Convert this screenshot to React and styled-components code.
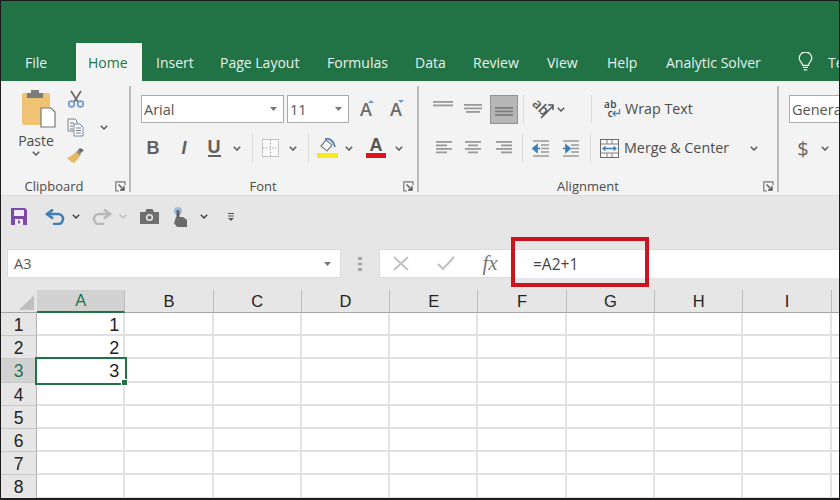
import React from "react";
import styled, { createGlobalStyle } from "styled-components";

const GlobalStyle = createGlobalStyle`
  html, body { margin: 0; padding: 0; background: #fff; }
  * { box-sizing: border-box; }
`;

const Frame = styled.div`
  width: 840px;
  height: 500px;
  display: flex;
  flex-direction: column;
  overflow: hidden;
  border: 1px solid #1c1c1c;
  border-bottom-width: 2px;
  background: #e6e6e6;
  font-family: "Open Sans", "Noto Sans", sans-serif;
  color: #4a4a4a;
`;

const TitleBand = styled.div`
  height: 80px;
  flex: none;
  background: #217346;
  padding: 42px 0 0 10px;
  display: flex;
`;

const Tab = styled.div`
  flex: none;
  width: ${(p) => p.$w}px;
  height: 38px;
  display: flex;
  align-items: center;
  padding-left: ${(p) => (p.$active ? 12 : 14)}px;
  font-size: 14px;
  white-space: nowrap;
  color: ${(p) => (p.$active ? "#217346" : "#e9f1ec")};
  background: ${(p) => (p.$active ? "#f3f3f3" : "transparent")};
`;

const Ribbon = styled.div`
  height: 115px;
  flex: none;
  display: flex;
  background: #f3f3f3;
  border-bottom: 1px solid #dcdcdc;
`;

const Group = styled.div`
  flex: none;
  position: relative;
  width: ${(p) => p.$w}px;
  display: flex;
  flex-direction: column;
  &::after {
    content: "";
    position: absolute;
    top: 5px;
    bottom: 3px;
    right: 0;
    width: 2px;
    background: ${(p) => (p.$last ? "transparent" : "#bdbdbd")};
  }
`;

const GroupBody = styled.div`
  height: 96px;
  flex: none;
  display: flex;
  flex-direction: ${(p) => (p.$row ? "row" : "column")};
  gap: ${(p) => (p.$row ? 0 : 11)}px;
  padding: ${(p) => (p.$row ? "9px 0 0 15px" : "14px 0 0 10px")};
`;

const GroupLabel = styled.div`
  height: 18px;
  display: flex;
  align-items: center;
  justify-content: center;
  font-size: 13px;
  position: relative;
  padding-right: ${(p) => p.$pr || 0}px;
`;

const Launcher = styled.svg`
  position: absolute;
  right: ${(p) => p.$right}px;
  top: 4px;
`;

const Row = styled.div`
  height: 28px;
  display: flex;
  align-items: center;
`;

const Slot = styled.div`
  flex: none;
  width: ${(p) => p.$w}px;
  margin-left: ${(p) => p.$ml || 0}px;
  margin-top: ${(p) => p.$mt || 0}px;
  display: flex;
  align-items: center;
  justify-content: center;
`;

const VSep = styled.div`
  flex: none;
  width: 1px;
  height: 28px;
  margin-left: ${(p) => p.$ml}px;
  background: #dadada;
`;

const PasteCol = styled.div`
  width: 40px;
  display: flex;
  flex-direction: column;
  align-items: center;
`;

const PasteIcon = styled.svg`
  align-self: flex-end;
`;

const PasteLabel = styled.div`
  font-size: 14px;
  line-height: 19px;
  margin-top: 3px;
  margin-bottom: 1px;
`;

const SmallIcons = styled.div`
  width: 20px;
  margin-left: 10px;
  display: flex;
  flex-direction: column;
  align-items: center;
  gap: 10px;
`;

const ClipMore = styled.div`
  width: 36px;
  padding-top: 35px;
  display: flex;
  justify-content: center;
`;

const Combo = styled.div`
  flex: none;
  width: ${(p) => p.$w}px;
  margin-left: ${(p) => p.$ml || 0}px;
  height: 28px;
  display: flex;
  align-items: center;
  justify-content: space-between;
  padding: 0 6px 0 2px;
  background: #fff;
  border: 1px solid #ababab;
  font-size: 14.5px;
  white-space: nowrap;
  color: #555;
`;

const SizeA = styled.div`
  position: relative;
  font-size: 18px;
  font-weight: 600;
  color: #6a6a6a;
  line-height: 1;
  &::after {
    content: "";
    position: absolute;
    right: -2px;
    top: 0;
    border-left: 3px solid transparent;
    border-right: 3px solid transparent;
    ${(p) => (p.$down ? "border-top" : "border-bottom")}: 3px solid #6b9bc6;
  }
`;

const StyleLetter = styled.div`
  font-family: "Liberation Sans", sans-serif;
  font-size: 18px;
  font-weight: 700;
  color: #616161;
  font-style: ${(p) => (p.$italic ? "italic" : "normal")};
  border-bottom: ${(p) => (p.$under ? "2px solid #616161" : "none")};
  line-height: ${(p) => (p.$under ? "16px" : "18px")};
`;

const ColorA = styled.div`
  width: 20px;
  text-align: center;
  font-family: "Liberation Sans", sans-serif;
  font-size: 18px;
  font-weight: 700;
  line-height: 15px;
  color: #555;
  border-bottom: 5px solid #e1101b;
`;

const ActiveAlign = styled.div`
  flex: none;
  width: 28px;
  height: 29px;
  margin-left: 1px;
  display: flex;
  align-items: center;
  justify-content: center;
  padding-top: 7px;
  background: #b6b6b6;
  border: 1px solid #929292;
`;

const ActionText = styled.div`
  flex: none;
  width: ${(p) => p.$w}px;
  margin-left: 5px;
  margin-top: -2px;
  font-size: 14.3px;
  white-space: nowrap;
  color: #4c4c4c;
`;

const WrapGlyph = styled.div`
  width: 17px;
  position: relative;
  font-size: 10px;
  line-height: 9px;
  color: #444;
  font-weight: 600;
  letter-spacing: 0.5px;
  text-align: center;
  padding-right: 2px;
`;

const WrapArrow = styled.svg`
  position: absolute;
  right: -1px;
  bottom: 0;
`;

const OrientGlyph = styled.div`
  position: relative;
  width: 23px;
  height: 21px;
`;

const OrientText = styled.span`
  position: absolute;
  left: 1px;
  top: 0;
  font-size: 14px;
  line-height: 15px;
  font-weight: 600;
  color: #5c5c5c;
  transform: rotate(45deg);
`;

const OrientArrow = styled.svg`
  position: absolute;
  left: 0;
  top: 0;
`;

const Dollar = styled.div`
  font-size: 20px;
  color: #666;
`;

const QuickBar = styled.div`
  height: 44px;
  flex: none;
  display: flex;
  align-items: center;
  padding-bottom: 3px;
`;

const FormulaRow = styled.div`
  height: 50px;
  flex: none;
  display: flex;
  align-items: flex-start;
  padding: 9px 0 0 6px;
`;

const NameBox = styled.div`
  flex: none;
  width: 334px;
  height: 29px;
  display: flex;
  align-items: center;
  justify-content: space-between;
  padding: 0 9px 0 6px;
  background: #fff;
  border: 1px solid #dcdcdc;
  font-size: 14.5px;
  color: #555;
`;

const Grip = styled.div`
  flex: none;
  width: 38px;
  height: 29px;
  display: flex;
  align-items: center;
  justify-content: center;
`;

const FuncBox = styled.div`
  flex: none;
  width: 133px;
  height: 29px;
  display: flex;
  align-items: center;
  background: #fff;
  border: 1px solid #dcdcdc;
  border-right: none;
`;

const Fx = styled.div`
  flex: none;
  width: 24px;
  margin-left: 23px;
  text-align: center;
  font-family: "Liberation Serif", serif;
  font-size: 21px;
  font-style: italic;
  color: #777;
`;

const FormulaInput = styled.div`
  flex: 1;
  position: relative;
  height: 29px;
  padding-left: 21px;
  line-height: 28px;
  background: #fff;
  border-top: 1px solid #dcdcdc;
  font-size: 15.5px;
  color: #444;
`;

const RedBox = styled.div`
  position: absolute;
  left: -1px;
  top: -13px;
  width: 138px;
  height: 50px;
  border: 4px solid #cb141d;
`;

const Sheet = styled.div`
  display: grid;
  grid-template-columns: 36px repeat(10, 88.3px);
  grid-template-rows: 23px repeat(8, 23.2px);
  font-family: "Liberation Sans", Arial, sans-serif;
  background: #fff;
`;

const Corner = styled.div`
  background: #e6e6e6;
  border-bottom: 1px solid #a6a6a6;
  display: flex;
  align-items: flex-end;
  justify-content: flex-end;
  padding: 0 3px 2px 0;
`;

const ColHead = styled.div`
  display: flex;
  align-items: center;
  justify-content: center;
  font-size: 16.5px;
  background: ${(p) => (p.$on ? "#d2d2d2" : "#e6e6e6")};
  color: ${(p) => (p.$on ? "#217346" : "#222")};
  border-right: 1px solid #bcbcbc;
  border-bottom: ${(p) => (p.$on ? "2px solid #217346" : "1px solid #a6a6a6")};
`;

const RowHead = styled.div`
  display: flex;
  align-items: center;
  justify-content: center;
  padding-top: 3px;
  font-size: 17.5px;
  background: ${(p) => (p.$on ? "#d2d2d2" : "#e6e6e6")};
  color: ${(p) => (p.$on ? "#217346" : "#222")};
  border-bottom: 1px solid #c8c8c8;
  border-right: 1px solid #b4b4b4;
`;

const Cell = styled.div`
  position: relative;
  display: flex;
  align-items: center;
  justify-content: flex-end;
  padding: 3px 4px 0 0;
  font-size: 18px;
  color: #1f1f1f;
  border-right: 2px solid #e3e3e3;
  border-bottom: 2px solid #e0e0e0;
  ${(p) =>
    p.$selected &&
    `
    border-color: transparent;
    outline: 2px solid #217346;
    outline-offset: 0;
    z-index: 1;
    &::after {
      content: "";
      position: absolute;
      right: -4px;
      bottom: -4px;
      width: 5px;
      height: 5px;
      background: #217346;
      outline: 1px solid #fff;
    }
  `}
`;

const Chevron = ({ color = "#5a5a5a" }) => (
  <svg width="8" height="5" viewBox="0 0 8 5">
    <path d="M.8.8 4 4l3.2-3.2" fill="none" stroke={color} strokeWidth="1.5" />
  </svg>
);

const Caret = () => (
  <svg width="7" height="4" viewBox="0 0 7 4">
    <path d="M0 0h7L3.5 4z" fill="#777" />
  </svg>
);

const LauncherIcon = ({ right }) => (
  <Launcher $right={right} width="11" height="11" viewBox="0 0 11 11">
    <path d="M10 4V.8H.8V10H4" fill="none" stroke="#777" strokeWidth="1.2" />
    <path d="M3.5 3.5 9 9M9 5v4H5" fill="none" stroke="#555" strokeWidth="1.3" />
  </Launcher>
);

const Lines = ({ rows, width = 16, color = "#9a9a9a" }) => (
  <svg width={width} height={rows.length * 3.5} viewBox={`0 0 ${width} ${rows.length * 3.5}`}>
    {rows.map(([x, w], i) => (
      <rect key={i} x={x} y={i * 3.5} width={w} height="1.8" fill={color} />
    ))}
  </svg>
);

const Scissors = () => (
  <svg width="18" height="18" viewBox="0 0 18 18">
    <path d="M4 1l7 11M14 1 7 12" stroke="#6d6d6d" strokeWidth="1.8" fill="none" />
    <circle cx="4.5" cy="14" r="2.8" fill="none" stroke="#6f9ccb" strokeWidth="1.7" />
    <circle cx="13.5" cy="14" r="2.8" fill="none" stroke="#6f9ccb" strokeWidth="1.7" />
  </svg>
);

const Copy = () => (
  <svg width="18" height="19" viewBox="0 0 18 19">
    <path d="M1 1h7l2 2v10H1z" fill="#f6f6f6" stroke="#808080" />
    <path d="M7 6h6l3 3v9H7z" fill="#fff" stroke="#6e8ba8" />
    <path d="M3 5h4M3 8h3M3 11h3M9 10h5M9 12.500h5M9 15h5" stroke="#7a7a7a" />
  </svg>
);

const Brush = () => (
  <svg width="18" height="17" viewBox="0 0 18 17">
    <path d="M9 5l4 4-3 4-3 3-3-1.500L0 11l4-2z" fill="#e9b862" />
    <path d="M9 5l2-2 3 3-1 3z" fill="#a08a68" />
    <path d="M11 3l2-2 4 2-3 3z" fill="#6a6a6a" />
  </svg>
);

const BorderIcon = () => (
  <svg width="17" height="18" viewBox="0 0 17 18">
    <rect x=".5" y=".5" width="16" height="17" fill="#fbfbfb" stroke="#c4c4c4" />
    <path d="M8.500 1v16M1 9h15" stroke="#a6a6a6" strokeDasharray="1.500 1.500" />
  </svg>
);

const FillIcon = () => (
  <svg width="21" height="20" viewBox="0 0 21 20">
    <path d="M4 8l5-6 6 5-5 6z" fill="#fff" stroke="#7a7a7a" strokeWidth="1.2" />
    <path d="M8 1c4-1 7 1 9 5l1 3" fill="none" stroke="#4d86bb" strokeWidth="1.8" />
    <rect x="0" y="15" width="21" height="5" fill="#f4ea1f" />
  </svg>
);

const IndentIcon = ({ right }) => (
  <svg width="18" height="17" viewBox="0 0 18 17">
    <path d="M1 1h16M9 5h8M9 8.500h8M9 12h8M1 16h16" stroke="#9b9b9b" strokeWidth="1.5" />
    {right ? (
      <path d="M1 8.500h4M4 5l4 3.500L4 12z" stroke="#3f7db5" strokeWidth="1.6" fill="#3f7db5" />
    ) : (
      <path d="M8 8.500H4M5 5 1 8.500 5 12z" stroke="#3f7db5" strokeWidth="1.6" fill="#3f7db5" />
    )}
  </svg>
);

const MergeIcon = () => (
  <svg width="19" height="19" viewBox="0 0 19 19">
    <rect x=".5" y=".5" width="18" height="18" fill="#fafafa" stroke="#6a6a6a" />
    <path d="M1 5h17M1 14h17M7 1v4M12 1v4M7 14v4M12 14v4" stroke="#808080" />
    <path d="M3 9.500h13M5.500 7.500l-2.500 2 2.500 2M13.500 7.500l2.500 2-2.500 2" fill="none" stroke="#3f7db5" strokeWidth="1.3" />
  </svg>
);

const SaveIcon = () => (
  <svg width="16" height="17" viewBox="0 0 16 17">
    <path d="M0 0h14l2 2v15H0z" fill="#7d4aa8" />
    <rect x="3" y="2" width="10" height="6" fill="#f0eaf5" />
    <rect x="4" y="11" width="8" height="6" fill="#f0eaf5" />
    <rect x="7" y="12.500" width="2" height="3" fill="#7d4aa8" />
  </svg>
);

const ArrowIcon = ({ flip, color }) => (
  <svg width="20" height="16" viewBox="0 0 20 16" style={flip ? { transform: "scaleX(-1)" } : undefined}>
    <path d="M4 5h9a5 5 0 0 1 0 10H8" fill="none" stroke={color} strokeWidth="2.6" />
    <path d="M8 .5 2 5l6 4.500" fill="none" stroke={color} strokeWidth="2.6" />
  </svg>
);

const CameraIcon = () => (
  <svg width="19" height="15" viewBox="0 0 19 15">
    <path d="M0 3h5l1.500-3h6L14 3h5v12H0z" fill="#6f6f6f" />
    <circle cx="9.500" cy="8.500" r="3.600" fill="#e6e6e6" />
    <circle cx="9.500" cy="8.500" r="2" fill="#6f6f6f" />
  </svg>
);

const TouchIcon = () => (
  <svg width="15" height="20" viewBox="0 0 15 20">
    <circle cx="5" cy="4" r="4" fill="#9dbcd9" />
    <rect x="3.500" y="3" width="3" height="9" rx="1.400" fill="#5f5f5f" />
    <path d="M3 10h7l4 3v7H4l-3-4z" fill="#6a6a6a" />
  </svg>
);

const CustomizeIcon = () => (
  <svg width="8" height="8" viewBox="0 0 8 8">
    <path d="M1 .5h6M1 3h6" stroke="#555" strokeWidth="1.1" />
    <path d="M1 5h6L4 8z" fill="#555" />
  </svg>
);

const Bulb = () => (
  <svg width="15" height="20" viewBox="0 0 17 24">
    <path d="M5 16c0-3-4-4.500-4-8.500a7.500 7.500 0 0 1 15 0c0 4-4 5.500-4 8.500z" fill="none" stroke="#f1f6f3" strokeWidth="1.5" />
    <path d="M5.500 18.500h6M6.500 21.500h4" stroke="#f1f6f3" strokeWidth="1.6" />
  </svg>
);

const tabs = [
  ["File", 65],
  ["Home", 66, true],
  ["Insert", 64],
  ["Page Layout", 107],
  ["Formulas", 88],
  ["Data", 58],
  ["Review", 74],
  ["View", 60],
  ["Help", 59],
  ["Analytic Solver", 132],
];

const columns = ["A", "B", "C", "D", "E", "F", "G", "H", "I", "J"];
const values = { 1: 1, 2: 2, 3: 3 };

const App = () => (
  <>
    <GlobalStyle />
    <Frame>
      <TitleBand>
        {tabs.map(([label, w, active]) => (
          <Tab key={label} $w={w} $active={active}>
            {label}
          </Tab>
        ))}
        <Tab $w={30}>
          <Bulb />
        </Tab>
        <Tab $w={120}>Tell me what you want to do</Tab>
      </TitleBand>

      <Ribbon>
        <Group $w={130}>
          <GroupBody $row>
            <PasteCol>
              <PasteIcon width="34" height="38" viewBox="0 0 34 38">
                <rect x="0" y="3" width="28" height="32" rx="2" fill="#efc274" />
                <path d="M5 8V3h4V0h8v3h4v5z" fill="#7b7b7b" />
                <path d="M19 18h10l4 4v15H19z" fill="#fff" stroke="#777" strokeWidth="1.2" />
              </PasteIcon>
              <PasteLabel>Paste</PasteLabel>
              <Chevron />
            </PasteCol>
            <SmallIcons>
              <Scissors />
              <Copy />
              <Brush />
            </SmallIcons>
            <ClipMore>
              <Chevron />
            </ClipMore>
          </GroupBody>
          <GroupLabel $pr={24}>
            Clipboard
            <LauncherIcon right={5} />
          </GroupLabel>
        </Group>

        <Group $w={288}>
          <GroupBody>
            <Row>
              <Combo $w={143}>
                Arial
                <Caret />
              </Combo>
              <Combo $w={62} $ml={3}>
                11
                <Caret />
              </Combo>
              <Slot $w={30} $ml={2}>
                <SizeA>A</SizeA>
              </Slot>
              <Slot $w={30}>
                <SizeA $down>A</SizeA>
              </Slot>
            </Row>
            <Row>
              <Slot $w={24}>
                <StyleLetter>B</StyleLetter>
              </Slot>
              <Slot $w={38}>
                <StyleLetter $italic>I</StyleLetter>
              </Slot>
              <Slot $w={22}>
                <StyleLetter $under>U</StyleLetter>
              </Slot>
              <Slot $w={24}>
                <Chevron />
              </Slot>
              <VSep $ml={3} />
              <Slot $w={35}>
                <BorderIcon />
              </Slot>
              <Slot $w={10}>
                <Chevron />
              </Slot>
              <VSep $ml={10} />
              <Slot $w={36}>
                <FillIcon />
              </Slot>
              <Slot $w={8}>
                <Chevron />
              </Slot>
              <Slot $w={36} $ml={5}>
                <ColorA>A</ColorA>
              </Slot>
              <Slot $w={10}>
                <Chevron />
              </Slot>
            </Row>
          </GroupBody>
          <GroupLabel $pr={24}>
            Font
            <LauncherIcon right={5} />
          </GroupLabel>
        </Group>

        <Group $w={360}>
          <GroupBody>
            <Row>
              <Slot $w={28} $mt={-10}>
                <Lines width={20} rows={[[0, 20], [0, 20]]} />
              </Slot>
              <Slot $w={32}>
                <Lines width={18} rows={[[0, 18], [0, 18], [2, 14]]} />
              </Slot>
              <ActiveAlign>
                <Lines width={18} color="#7d7d7d" rows={[[0, 18], [0, 18], [0, 18]]} />
              </ActiveAlign>
              <VSep $ml={5} />
              <Slot $w={23} $ml={8}>
                <OrientGlyph>
                  <OrientText>ab</OrientText>
                  <OrientArrow width="23" height="21" viewBox="0 0 23 21">
                    <path d="M9 19 21 7M16 6h5v5" fill="none" stroke="#555" strokeWidth="1.5" />
                  </OrientArrow>
                </OrientGlyph>
              </Slot>
              <Slot $w={10} $ml={1}>
                <Chevron />
              </Slot>
              <VSep $ml={25} />
              <Slot $w={17} $ml={11}>
                <WrapGlyph>
                  ab
                  <br />c
                  <WrapArrow width="10" height="9" viewBox="0 0 10 9">
                    <path d="M8.500 0v4.500H2M4.500 2 2 4.500 4.500 7" fill="none" stroke="#4d86bb" strokeWidth="1.300" />
                  </WrapArrow>
                </WrapGlyph>
              </Slot>
              <ActionText $w={100}>Wrap Text</ActionText>
            </Row>
            <Row>
              <Slot $w={29}>
                <Lines rows={[[0, 16], [0, 11], [0, 16], [0, 11]]} />
              </Slot>
              <Slot $w={30}>
                <Lines rows={[[0, 16], [3, 10], [0, 16], [3, 10]]} />
              </Slot>
              <Slot $w={31}>
                <Lines rows={[[0, 16], [5, 11], [0, 16], [5, 11]]} />
              </Slot>
              <VSep $ml={3} />
              <Slot $w={18} $ml={9}>
                <IndentIcon />
              </Slot>
              <Slot $w={18} $ml={12}>
                <IndentIcon right />
              </Slot>
              <VSep $ml={10} />
              <Slot $w={19} $ml={9}>
                <MergeIcon />
              </Slot>
              <ActionText $w={120}>Merge &amp; Center</ActionText>
              <Slot $w={20}>
                <Chevron />
              </Slot>
            </Row>
          </GroupBody>
          <GroupLabel $pr={22}>
            Alignment
            <LauncherIcon right={5} />
          </GroupLabel>
        </Group>

        <Group $w={60} $last>
          <GroupBody>
            <Row>
              <Combo $w={60}>General</Combo>
            </Row>
            <Row>
              <Slot $w={28}>
                <Dollar>$</Dollar>
              </Slot>
              <Slot $w={16}>
                <Chevron />
              </Slot>
            </Row>
          </GroupBody>
        </Group>
      </Ribbon>

      <QuickBar>
        <Slot $w={16} $ml={10}>
          <SaveIcon />
        </Slot>
        <Slot $w={20} $ml={18}>
          <ArrowIcon color="#3f7db5" />
        </Slot>
        <Slot $w={8} $ml={7}>
          <Chevron color="#444" />
        </Slot>
        <Slot $w={20} $ml={12}>
          <ArrowIcon flip color="#b8b8b8" />
        </Slot>
        <Slot $w={8} $ml={7}>
          <Chevron color="#bdbdbd" />
        </Slot>
        <Slot $w={19} $ml={13}>
          <CameraIcon />
        </Slot>
        <Slot $w={15} $ml={14}>
          <TouchIcon />
        </Slot>
        <Slot $w={8} $ml={12}>
          <Chevron color="#444" />
        </Slot>
        <Slot $w={8} $ml={19}>
          <CustomizeIcon />
        </Slot>
      </QuickBar>

      <FormulaRow>
        <NameBox>
          A3
          <Caret />
        </NameBox>
        <Grip>
          <svg width="4" height="14" viewBox="0 0 4 14">
            <path d="M0 0h4v3H0zM0 5.500h4v3H0zM0 11h4v3H0z" fill="#a8a8a8" />
          </svg>
        </Grip>
        <FuncBox>
          <Slot $w={16} $ml={13}>
            <svg width="16" height="15" viewBox="0 0 16 15">
              <path d="M1 1l14 13M15 1 1 14" stroke="#c2c2c2" strokeWidth="2" />
            </svg>
          </Slot>
          <Slot $w={18} $ml={28}>
            <svg width="18" height="15" viewBox="0 0 18 15">
              <path d="M1 8l5 5L17 1" fill="none" stroke="#c2c2c2" strokeWidth="2.200" />
            </svg>
          </Slot>
          <Fx>fx</Fx>
        </FuncBox>
        <FormulaInput>
          =A2+1
          <RedBox />
        </FormulaInput>
      </FormulaRow>

      <Sheet>
        <Corner>
          <svg width="15" height="15" viewBox="0 0 15 15">
            <path d="M15 0v15H0z" fill="#bfbfbf" />
          </svg>
        </Corner>
        {columns.map((c) => (
          <ColHead key={c} $on={c === "A"}>
            {c}
          </ColHead>
        ))}
        {[1, 2, 3, 4, 5, 6, 7, 8].map((r) => (
          <React.Fragment key={r}>
            <RowHead $on={r === 3}>{r}</RowHead>
            {columns.map((c) => (
              <Cell key={c} $selected={c === "A" && r === 3}>
                {c === "A" ? values[r] : null}
              </Cell>
            ))}
          </React.Fragment>
        ))}
      </Sheet>
    </Frame>
  </>
);

export default App;
